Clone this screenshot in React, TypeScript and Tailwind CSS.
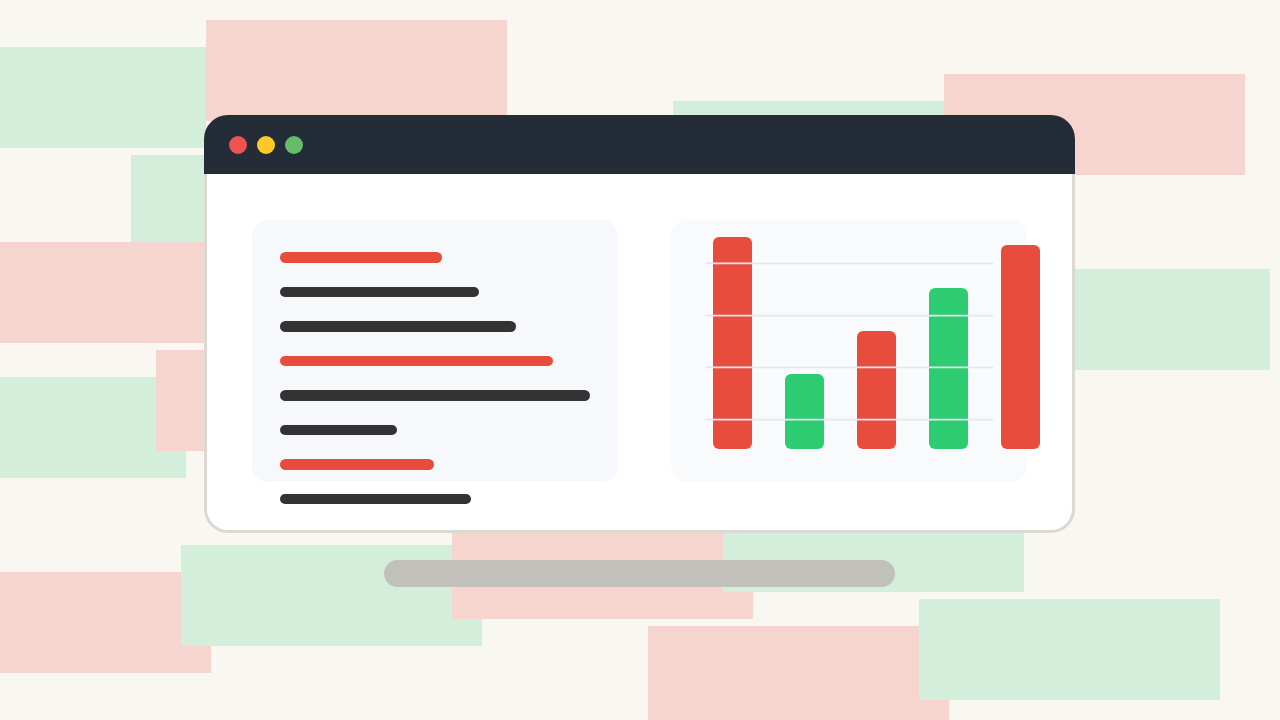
import React from "react";

type Block = { x: number; y: number; tone: "pink" | "green" };

// Decorative blocks scattered behind the window, listed in paint order.
const blocks: Block[] = [
  { x: -95, y: 47, tone: "green" },
  { x: 206, y: 20, tone: "pink" },
  { x: 131, y: 155, tone: "green" },
  { x: -96, y: 242, tone: "pink" },
  { x: 673, y: 101, tone: "green" },
  { x: 944, y: 74, tone: "pink" },
  { x: 969, y: 269, tone: "green" },
  { x: -115, y: 377, tone: "green" },
  { x: 156, y: 350, tone: "pink" },
  { x: -90, y: 572, tone: "pink" },
  { x: 181, y: 545, tone: "green" },
  { x: 452, y: 518, tone: "pink" },
  { x: 723, y: 491, tone: "green" },
  { x: 648, y: 626, tone: "pink" },
  { x: 919, y: 599, tone: "green" },
];

const lines = [
  { w: 162, red: true },
  { w: 199, red: false },
  { w: 236, red: false },
  { w: 273, red: true },
  { w: 310, red: false },
  { w: 117, red: false },
  { w: 154, red: true },
  { w: 191, red: false },
];

const bars = [
  { x: 42, top: 17, green: false },
  { x: 114, top: 154, green: true },
  { x: 186, top: 111, green: false },
  { x: 258, top: 68, green: true },
  { x: 330, top: 25, green: false },
];

function Chart() {
  return (
    <svg
      width={356}
      height={262}
      viewBox="0 0 356 262"
      className="absolute left-0 top-0 overflow-visible"
    >
      {bars.map((b, i) => (
        <rect
          key={i}
          x={b.x}
          y={b.top}
          width={39}
          height={229 - b.top}
          rx={6}
          fill={b.green ? "#2ecc71" : "#e74c3c"}
        />
      ))}
      {[43.3, 95.6, 147.3, 199.6].map((y) => (
        <line key={y} x1={34} x2={322} y1={y} y2={y} stroke="#e2e8f0" strokeWidth={1.8} />
      ))}
    </svg>
  );
}

export default function App() {
  return (
    <div className="relative w-[1280px] h-[720px] overflow-hidden bg-[#f8f7f2]">
      <div className="absolute inset-0">
        {blocks.map((b, i) => (
          <div
            key={i}
            className={`absolute w-[301px] h-[101px] ${b.tone === "pink" ? "bg-[#f5d5ce]" : "bg-[#d3eeda]"}`}
            style={{ left: b.x, top: b.y }}
          />
        ))}
      </div>

      <div className="relative flex flex-col items-start pl-[204px] pt-[115px]">
        <div className="flex flex-col w-[871px] h-[418px]">
          <div className="flex items-center gap-[10px] h-[59px] pl-[25px] rounded-t-[24px] bg-[#242c37]">
            <span className="w-[18px] h-[18px] rounded-full bg-[#ef5350]" />
            <span className="w-[18px] h-[18px] rounded-full bg-[#ffca28]" />
            <span className="w-[18px] h-[18px] rounded-full bg-[#66bb6a]" />
          </div>
          <div className="flex-1 flex gap-[53px] pl-[45px] pt-[46px] bg-white border-x-[3px] border-b-[3px] border-[#dcd9d3] rounded-b-[24px]">
            <div className="flex flex-col gap-[24px] w-[366px] h-[262px] pl-[28px] pt-[32px] rounded-[16px] bg-[#f7f8fc]">
              {lines.map((l, i) => (
                <div
                  key={i}
                  className={`shrink-0 h-[10.5px] rounded-full ${l.red ? "bg-[#e74c3c]" : "bg-[#333333]"}`}
                  style={{ width: l.w }}
                />
              ))}
            </div>
            <div className="relative w-[356px] h-[262px] rounded-[16px] bg-[#f8fafc]">
              <Chart />
            </div>
          </div>
        </div>
        <div className="ml-[180px] mt-[27px] w-[511px] h-[27px] rounded-full bg-[#c2c0bb]" />
      </div>
    </div>
  );
}
